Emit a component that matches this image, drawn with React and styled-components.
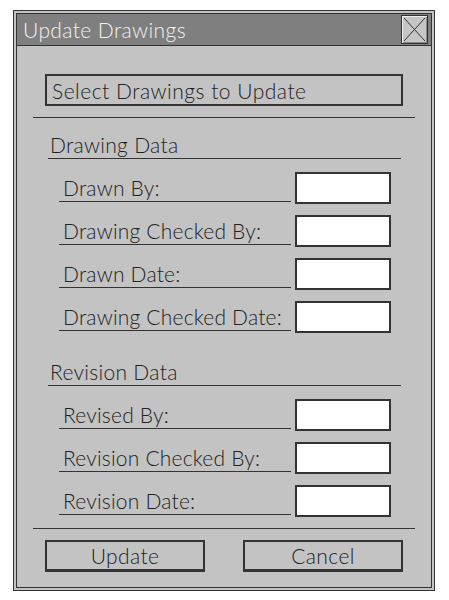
import React from 'react';
import styled, { createGlobalStyle } from 'styled-components';

const Global = createGlobalStyle`
  body {
    margin: 0;
    background: #fff;
    font-family: "Lato", "Liberation Sans", sans-serif;
  }
`

const Window = styled.div`
  box-sizing: border-box;
  width: 422px;
  height: 581px;
  margin: 10px 0 0 13px;
  border: 4px double #333;
  background: #c3c3c3;
  display: flex;
  flex-direction: column;
`

const TitleBar = styled.div`
  height: 31px;
  background: #7f7f7f;
  border-bottom: 1px solid #333;
  display: flex;
  align-items: center;
  justify-content: space-between;
  padding: 0 3px 0 6px;
`

const Title = styled.span`
  color: #f2f2f2;
  font-size: 21px;
  font-weight: 300;
  letter-spacing: 0.4px;
`

const CloseButton = styled.button`
  box-sizing: border-box;
  width: 27px;
  height: 29px;
  padding: 0;
  background: #c6c6c6;
  border: 1px solid #333;
  box-shadow: inset 1px 1px #eee, inset -1px -1px #888;
  display: flex;
  align-items: center;
  justify-content: center;
`

const SelectBox = styled.div`
  box-sizing: border-box;
  height: 32px;
  margin: 28px 28px 0;
  border: 2px solid #333;
  display: flex;
  align-items: center;
  padding-left: 5px;
  font-size: 21px;
  font-weight: 300;
  letter-spacing: 0.5px;
  color: #222;
`

const Separator = styled.div`
  height: 1px;
  background: #333;
  margin: ${p => p.$top}px 16px 0;
`

const SectionHeader = styled.div`
  height: 26px;
  line-height: 26px;
  margin: ${p => p.$top}px 30px 0 31px;
  padding-left: 2px;
  border-bottom: 1px solid #333;
  font-size: 21px;
  font-weight: 300;
  letter-spacing: 0.3px;
  color: #222;
`

const Rows = styled.div`
  display: flex;
  flex-direction: column;
  gap: 11px;
  margin-top: 13px;
  padding-left: 42px;
`

const Row = styled.div`
  display: flex;
  align-items: flex-end;
  gap: 4px;
`

const Label = styled.label`
  box-sizing: border-box;
  width: 232px;
  padding: 0 0 0 4px;
  margin-bottom: 2px;
  border-bottom: 1px solid #333;
  font-size: 21px;
  line-height: 26px;
  font-weight: 300;
  letter-spacing: 0.2px;
  color: #222;
  white-space: nowrap;
`

const Field = styled.input`
  box-sizing: border-box;
  width: 96px;
  height: 32px;
  margin: 0;
  background: #fff;
  border: 2px solid #333;
  outline: none;
`

const ButtonBar = styled.div`
  display: flex;
  justify-content: space-between;
  margin-top: 11px;
  padding: 0 28px;
`

const Button = styled.button`
  box-sizing: border-box;
  width: 160px;
  height: 32px;
  background: #c3c3c3;
  border: 2px solid #333;
  border-bottom-width: 3px;
  font-family: inherit;
  font-size: 21px;
  font-weight: 300;
  letter-spacing: 0.4px;
  color: #222;
  padding: 0;
`

const drawing = ['Drawn By:', 'Drawing Checked By:', 'Drawn Date:', 'Drawing Checked Date:']
const revision = ['Revised By:', 'Revision Checked By:', 'Revision Date:']

export default function App() {
  return (
    <>
      <Global />
      <Window>
        <TitleBar>
          <Title>Update Drawings</Title>
          <CloseButton>
            <svg width="23" height="25" viewBox="0 0 23 25">
              <path d="M1 1 L22 24 M22 1 L1 24" stroke="#333" strokeWidth="1" fill="none" />
            </svg>
          </CloseButton>
        </TitleBar>

        <SelectBox>Select Drawings to Update</SelectBox>
        <Separator $top={11} />

        <SectionHeader $top={14}>Drawing Data</SectionHeader>
        <Rows>
          {drawing.map(l => (
            <Row key={l}>
              <Label>{l}</Label>
              <Field />
            </Row>
          ))}
        </Rows>

        <SectionHeader $top={26}>Revision Data</SectionHeader>
        <Rows>
          {revision.map(l => (
            <Row key={l}>
              <Label>{l}</Label>
              <Field />
            </Row>
          ))}
        </Rows>

        <Separator $top={11} />
        <ButtonBar>
          <Button>Update</Button>
          <Button>Cancel</Button>
        </ButtonBar>
      </Window>
    </>
  )
}
